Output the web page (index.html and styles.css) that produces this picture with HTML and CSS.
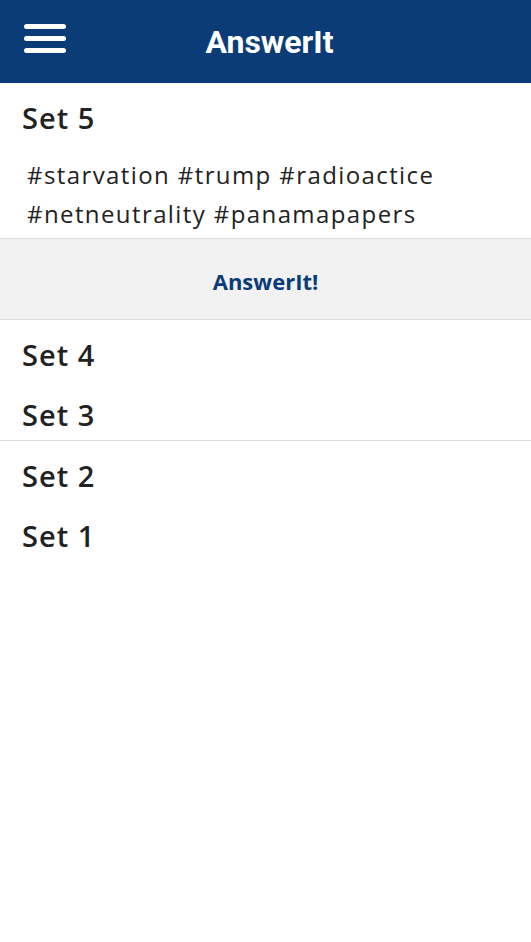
FILE: index.html
```html
<!DOCTYPE html>
<html lang="en">
<head>
  <meta charset="UTF-8" />
  <meta name="viewport" content="width=device-width, initial-scale=1" />
  <title>AnswerIt</title>
  <link rel="stylesheet" href="styles.css">
</head>
<body>

  <div class="topbar">
    <div class="menu-btn">
      <span></span>
      <span></span>
      <span></span>
    </div>
    <h1>AnswerIt</h1>
  </div>

  <div class="set-group">
    <div class="set open">
      <h2>Set 5</h2>
      <p class="tags">#starvation #trump #radioactice #netneutrality #panamapapers</p>
    </div>
    <button class="answer-btn">AnswerIt!</button>
  </div>

  <div class="set-group">
    <div class="set"><h2>Set 4</h2></div>
    <div class="set"><h2>Set 3</h2></div>
  </div>

  <div class="set-group last">
    <div class="set"><h2>Set 2</h2></div>
    <div class="set"><h2>Set 1</h2></div>
  </div>

</body>
</html>
```

FILE: styles.css
```css
body {
  margin: 0;
  font-family: 'Open Sans', sans-serif;
  color: #222;
  background-color: #fff;
}

.topbar {
  height: 83px;
  background-color: #0b3c77;
  display: flex;
  align-items: center;
  justify-content: center;
  position: relative;
}

.topbar h1 {
  margin: 0;
  padding-left: 8px;
  color: #fff;
  font-family: 'Roboto', sans-serif;
  font-weight: bold;
  font-size: 32px;
}

.menu-btn {
  position: absolute;
  left: 24px;
  top: 24px;
  width: 42px;
  display: flex;
  flex-direction: column;
  gap: 7px;
}

.menu-btn span {
  display: block;
  height: 5px;
  background-color: #fff;
  border-radius: 3px;
}

.set-group {
  border-bottom: 1px solid #dcdcdc;
}

.set-group.last {
  border-bottom: none;
}

.set h2 {
  margin: 0;
  padding: 0 22px;
  height: 60px;
  line-height: 70px;
  font-size: 29px;
  font-weight: 600;
  letter-spacing: 1px;
}

.tags {
  margin: 0;
  padding: 12px 27px 5px;
  font-size: 24px;
  line-height: 39px;
  letter-spacing: 1.4px;
}

.answer-btn {
  display: block;
  width: 100%;
  height: 81px;
  border: none;
  border-top: 1px solid #dcdcdc;
  background-color: #f2f2f2;
  color: #0b3c77;
  font-family: 'Open Sans', sans-serif;
  font-weight: bold;
  font-size: 22px;
  padding: 4px 0 0;
}
```
